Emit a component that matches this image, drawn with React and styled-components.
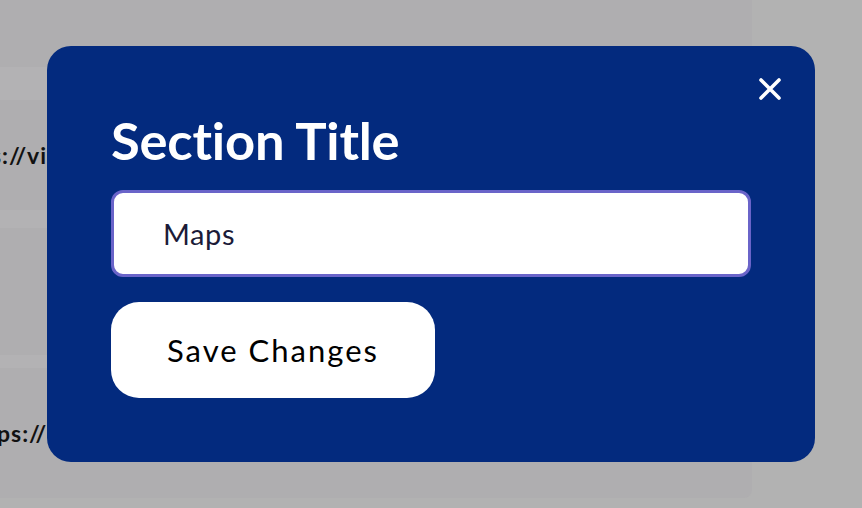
import React from "react";
import styled, { createGlobalStyle } from "styled-components";

const Global = createGlobalStyle`
  html, body { margin: 0; padding: 0; }
  body {
    background: #b2b2b2;
    font-family: Lato, "Open Sans", sans-serif;
    overflow: hidden;
  }
`;

const Page = styled.div`
  width: 752px;
  height: 498px;
  background: #afaeb0;
  border-bottom-right-radius: 8px;
  display: flex;
  flex-direction: column;
  overflow: hidden;
`;

const Row = styled.div`
  height: ${(p) => p.$h}px;
  background: ${(p) => (p.$light ? "#b3b2b4" : "transparent")};
  display: flex;
  align-items: center;
  font-family: Lato, sans-serif;
  font-weight: 700;
  font-size: 23px;
  letter-spacing: 1px;
  color: #111;
  text-indent: ${(p) => p.$indent || 0}px;
  white-space: nowrap;
`;

const Backdrop = styled.div`
  position: fixed;
  inset: 0;
  display: flex;
  align-items: center;
  justify-content: center;
`;

const Modal = styled.div`
  position: relative;
  width: 768px;
  height: 416px;
  box-sizing: border-box;
  padding: 64px;
  background: #032a7e;
  border-radius: 24px;
  display: flex;
  flex-direction: column;
`;

const Close = styled.button`
  position: absolute;
  top: 27px;
  right: 29px;
  width: 32px;
  height: 32px;
  padding: 0;
  border: none;
  background: transparent;
  display: flex;
  align-items: center;
  justify-content: center;
  cursor: pointer;
`;

const Title = styled.h2`
  margin: 0 0 20px;
  font-family: Lato, sans-serif;
  font-weight: 700;
  font-size: 52.5px;
  line-height: 60px;
  color: #fff;
  letter-spacing: -0.2px;
`;

const Input = styled.input`
  box-sizing: border-box;
  width: 100%;
  height: 87px;
  border: 3px solid #6a64c9;
  border-radius: 12px;
  background: #fff;
  padding: 0 49px;
  font-family: Lato, sans-serif;
  font-size: 29px;
  letter-spacing: 0.6px;
  color: #1b1b38;
  outline: none;
`;

const SaveButton = styled.button`
  align-self: flex-start;
  margin-top: 25px;
  height: 96px;
  padding: 0 56px;
  border: none;
  border-radius: 28px;
  background: #fff;
  font-family: Lato, sans-serif;
  font-size: 31px;
  letter-spacing: 2px;
  color: #000;
  cursor: pointer;
`;

export default function App() {
  return (
    <>
      <Global />
      <Page>
        <Row $h={67} />
        <Row $h={33} $light />
        <Row $h={110} $indent={-9}>s://vimeo.com/maps</Row>
        <Row $h={18} $light />
        <Row $h={127} />
        <Row $h={13} $light />
        <Row $h={130} $indent={-3}>ps://www.google.com</Row>
      </Page>
      <Backdrop>
        <Modal>
          <Close aria-label="Close">
            <svg width="24" height="24" viewBox="0 0 24 24">
              <path d="M3 3 L21 21 M21 3 L3 21" stroke="#fff" strokeWidth="3.6" strokeLinecap="round" fill="none" />
            </svg>
          </Close>
          <Title>Section Title</Title>
          <Input defaultValue="Maps" />
          <SaveButton>Save Changes</SaveButton>
        </Modal>
      </Backdrop>
    </>
  );
}
